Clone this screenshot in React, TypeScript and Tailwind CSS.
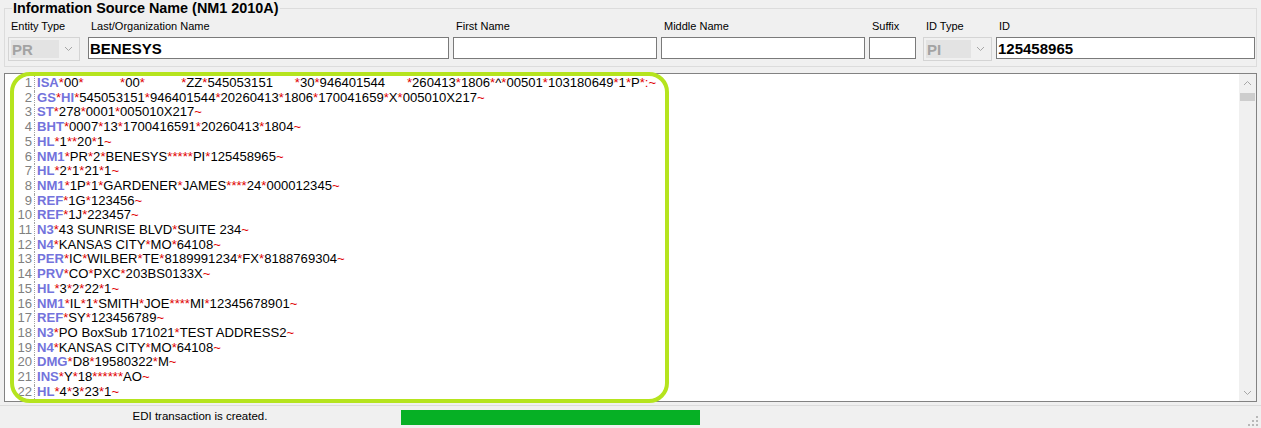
import React from 'react';

const lines = [
  'ISA*00*          *00*          *ZZ*545053151      *30*946401544      *260413*1806*^*00501*103180649*1*P*:~',
  'GS*HI*545053151*946401544*20260413*1806*170041659*X*005010X217~',
  'ST*278*0001*005010X217~',
  'BHT*0007*13*1700416591*20260413*1804~',
  'HL*1**20*1~',
  'NM1*PR*2*BENESYS*****PI*125458965~',
  'HL*2*1*21*1~',
  'NM1*1P*1*GARDENER*JAMES****24*000012345~',
  'REF*1G*123456~',
  'REF*1J*223457~',
  'N3*43 SUNRISE BLVD*SUITE 234~',
  'N4*KANSAS CITY*MO*64108~',
  'PER*IC*WILBER*TE*8189991234*FX*8188769304~',
  'PRV*CO*PXC*203BS0133X~',
  'HL*3*2*22*1~',
  'NM1*IL*1*SMITH*JOE****MI*12345678901~',
  'REF*SY*123456789~',
  'N3*PO BoxSub 171021*TEST ADDRESS2~',
  'N4*KANSAS CITY*MO*64108~',
  'DMG*D8*19580322*M~',
  'INS*Y*18******AO~',
  'HL*4*3*23*1~',
];

// split a segment into name + coloured separators
function Segment({ text }: { text: string }) {
  const idx = text.indexOf('*');
  const name = text.slice(0, idx);
  const rest = text.slice(idx);
  const parts = rest.split(/([*~:])/).filter((p) => p !== '');
  return (
    <>
      <span className="font-bold text-[#7373dc]">{name}</span>
      {parts.map((p, i) => {
        if (p === '*' || p === '~' || p === ':') {
          return <span key={i} className="text-[#e00000]">{p}</span>;
        }
        // functional group code in GS is highlighted like a segment id
        if (name === 'GS' && i === 1) {
          return <span key={i} className="font-bold text-[#7373dc]">{p}</span>;
        }
        return <span key={i}>{p}</span>;
      })}
    </>
  );
}

function Chevron({ dir }: { dir: 'up' | 'down' }) {
  return (
    <svg width="9" height="6" viewBox="0 0 9 6" className="block">
      {dir === 'down' ? (
        <polyline points="1,1 4.5,4.5 8,1" fill="none" stroke="#a6a6a6" strokeWidth="1" />
      ) : (
        <polyline points="1,5 4.5,1.5 8,5" fill="none" stroke="#a6a6a6" strokeWidth="1" />
      )}
    </svg>
  );
}

function Field({ label, width, ml, value }: { label: string; width: string; ml: string; value?: string }) {
  return (
    <div className={`flex flex-col ${width} ${ml}`}>
      <span className="pl-[3px] text-[11px] leading-[13px] text-black">{label}</span>
      <div className="mt-[4px] flex h-[22px] items-center border border-[#7a7a7a] bg-white px-[1px] text-[15px] font-bold leading-none text-black">
        {value}
      </div>
    </div>
  );
}

function Combo({ label, width, ml, value }: { label: string; width: string; ml: string; value: string }) {
  return (
    <div className={`flex flex-col ${width} ${ml}`}>
      <span className="pl-[3px] text-[11px] leading-[13px] text-black">{label}</span>
      <div className="mt-[4px] flex h-[24px] items-stretch border border-[#d4d4d4] bg-[#f0f0f0] p-[2px]">
        <div className="flex flex-1 items-center bg-[#e3e3e3] pl-[1px] text-[15px] font-bold leading-none text-[#a3a3a3]">
          {value}
        </div>
        <div className="flex w-[18px] items-center justify-center">
          <Chevron dir="down" />
        </div>
      </div>
    </div>
  );
}

export default function App() {
  return (
    <div className="relative h-[428px] w-[1261px] overflow-hidden bg-[#f0f0f0] font-['Liberation_Sans',Arial,sans-serif]">
      <fieldset className="mx-[4px] h-[67px] border border-[#dcdcdc] pl-[3px]">
        <legend className="ml-[4px] px-[1px] text-[14.4px] font-bold leading-[16px] text-black">
          Information Source Name (NM1 2010A)
        </legend>
        <div className="flex pt-[4px]">
          <Combo label="Entity Type" width="w-[72px]" ml="ml-0" value="PR" />
          <Field label="Last/Organization Name" width="w-[361px]" ml="ml-[8px]" value="BENESYS" />
          <Field label="First Name" width="w-[204px]" ml="ml-[4px]" />
          <Field label="Middle Name" width="w-[204px]" ml="ml-[4px]" />
          <Field label="Suffix" width="w-[47px]" ml="ml-[4px]" />
          <Combo label="ID Type" width="w-[69px]" ml="ml-[7px]" value="PI" />
          <Field label="ID" width="w-[259px]" ml="ml-[4px]" value="125458965" />
        </div>
      </fieldset>

      <div className="mx-[4px] mt-[6px] flex h-[329px] border border-[#828282] bg-white">
        <div className="flex-1 overflow-hidden pt-[2px] text-[13.1px] leading-[14.7px] text-black">
          {lines.map((l, i) => (
            <div key={i} className="flex">
              <span className="w-[30px] shrink-0 border-r border-dotted border-[#a0a0a0] pr-[2px] text-right text-[#808080]">
                {i + 1}
              </span>
              <span className="whitespace-pre pl-[2px]">
                <Segment text={l} />
              </span>
            </div>
          ))}
        </div>
        <div className="flex w-[17px] flex-col bg-[#f0f0f0]">
          <div className="flex h-[17px] items-center justify-center">
            <Chevron dir="up" />
          </div>
          <div className="mx-[1px] mt-[2px] h-[8px] bg-[#cdcdcd]" />
          <div className="flex-1" />
          <div className="flex h-[17px] items-center justify-center">
            <Chevron dir="down" />
          </div>
        </div>
      </div>

      <div className="mt-[3px] flex h-[23px] items-center border-t border-[#dcdcdc]">
        <div className="w-[400px] text-center text-[11.5px] text-black">EDI transaction is created.</div>
        <div className="ml-[1px] h-[15px] w-[299px] bg-[#06b025]" />
        <div className="flex-1" />
        <svg width="10" height="10" viewBox="0 0 10 10" className="mr-[3px] mt-[8px]">
          <rect x="8" y="0" width="2" height="2" fill="#b8b8b8" />
          <rect x="4" y="4" width="2" height="2" fill="#b8b8b8" />
          <rect x="8" y="4" width="2" height="2" fill="#b8b8b8" />
          <rect x="0" y="8" width="2" height="2" fill="#b8b8b8" />
          <rect x="4" y="8" width="2" height="2" fill="#b8b8b8" />
          <rect x="8" y="8" width="2" height="2" fill="#b8b8b8" />
        </svg>
      </div>

      {/* highlight annotation drawn over the editor */}
      <div className="pointer-events-none absolute left-[10px] top-[72px] h-[331px] w-[659px] rounded-[20px] border-[4px] border-[#b5e41e]" />
    </div>
  );
}
